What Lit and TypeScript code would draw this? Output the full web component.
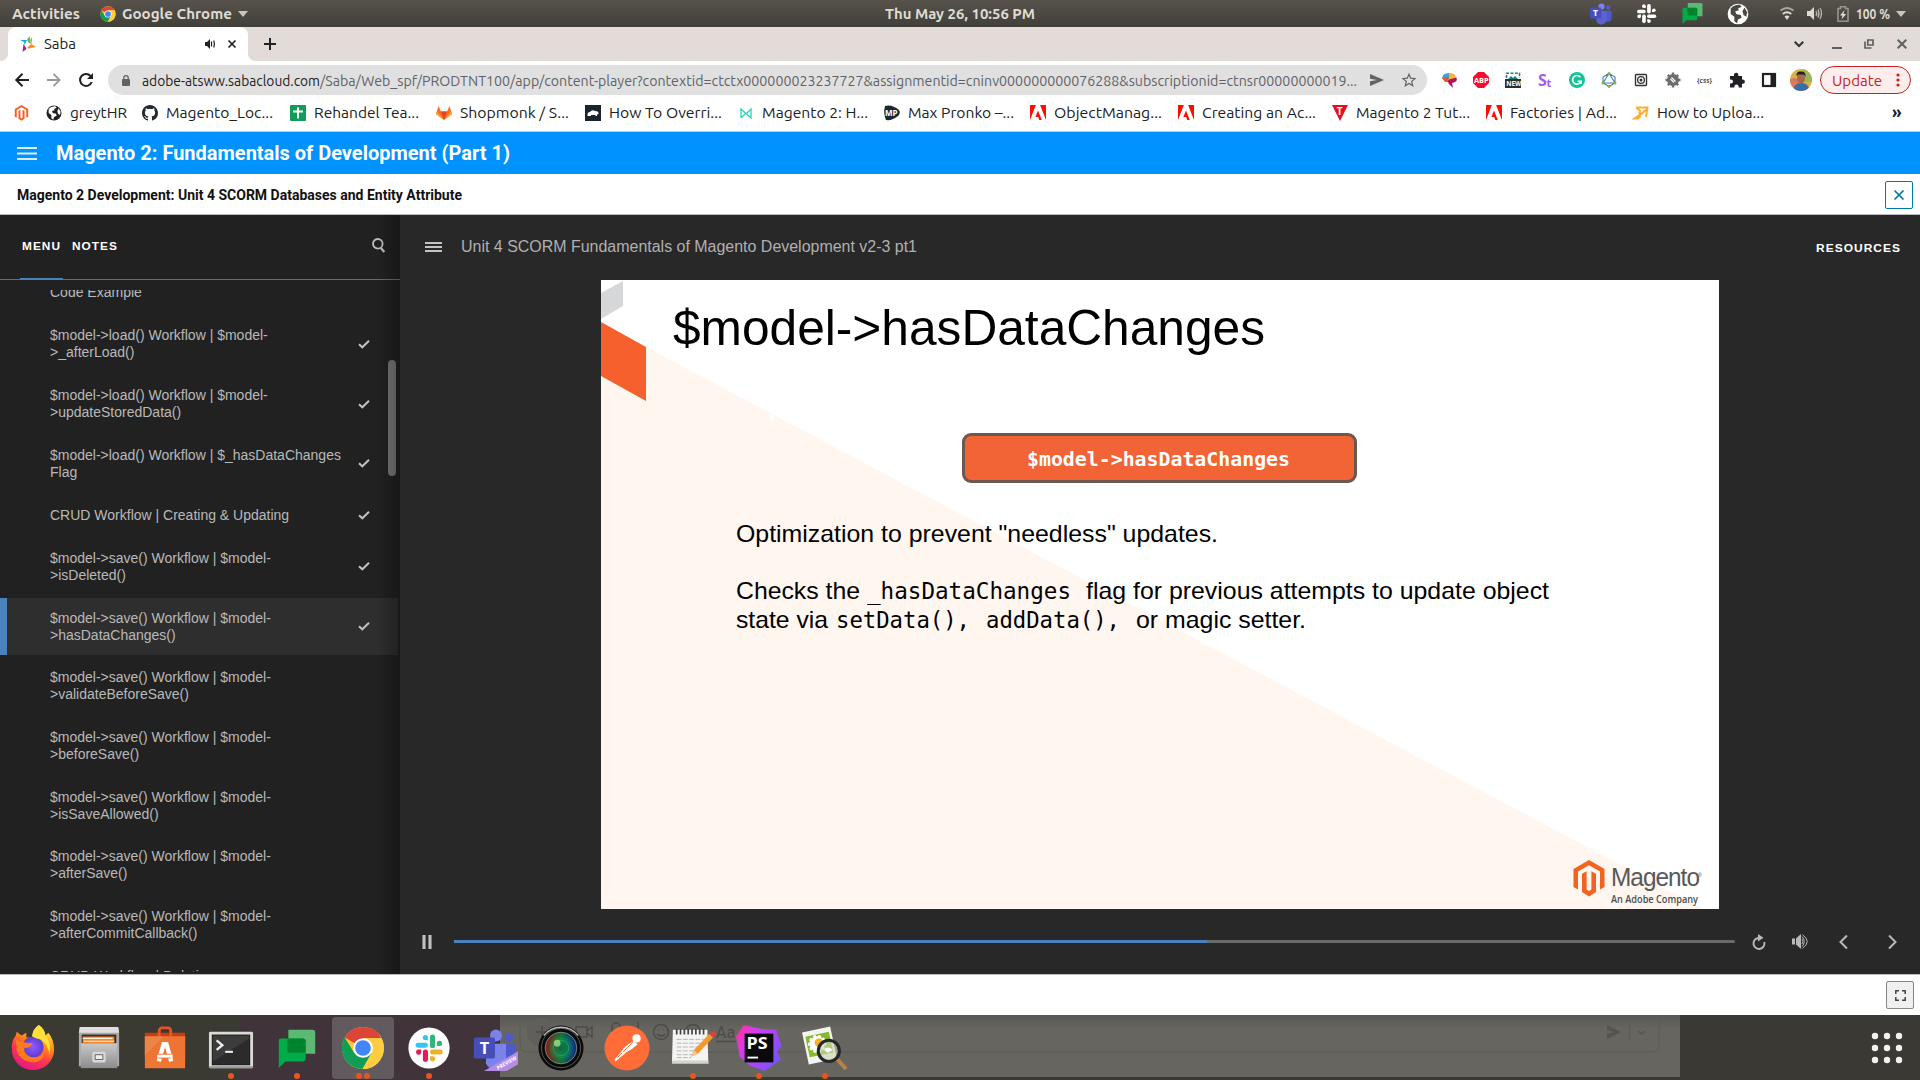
import { LitElement, html, css, svg, nothing } from "lit";
import { customElement, property } from "lit/decorators.js";

/** A run of text drawn at an exact measured width. */
@customElement("fit-text")
class FitText extends LitElement {
  @property({ type: Number }) w = 0;
  static styles = css`
    :host { display: inline-block; white-space: pre; flex: none; }
    .run { display: inline-block; transform-origin: 0 50%; white-space: pre; }
  `;
  render() {
    return html`<span class="run"><slot></slot></span>`;
  }
  firstUpdated() {
    const run = this.renderRoot.querySelector(".run") as HTMLElement;
    const natural = run.getBoundingClientRect().width;
    this.style.width = this.w + "px";
    if (natural > 0) run.style.transform = `scaleX(${this.w / natural})`;
  }
}

const icon = (w: number, h: number, body: unknown, vb = `0 0 ${w} ${h}`) =>
  html`<svg class="ico" width=${w} height=${h} viewBox=${vb}>${body}</svg>`;
const t = (w: number, s: string, cls = "") => html`<fit-text class=${cls} .w=${w}>${s}</fit-text>`;

const chromeBody = svg`
  <circle cx="24" cy="24" r="22" fill="#fcc934"/>
  <path d="M24 24 L4.9 13 A22 22 0 0 1 43.1 13.5 L24 13.5 Z" fill="#db4437"/>
  <path d="M4.9 13 A22 22 0 0 0 23.5 46 L33 29 L24 24 L14.9 29.2 Z" fill="#0f9d58"/>
  <path d="M43.1 13.5 H24 L33.2 29.2 L23.5 46 A22 22 0 0 0 43.1 13.5Z" fill="#ffcd40"/>
  <circle cx="24" cy="24" r="10.3" fill="#fff"/><circle cx="24" cy="24" r="8.2" fill="#4285f4"/>`;

const magentoBody = svg`
  <path d="M16 0 L31.5 9 V27 L27 29.6 V11.6 L16 5.2 L5 11.6 V29.6 L.5 27 V9 Z"/>
  <path d="M9 13.8 L13.6 11.2 V29.5 L16 31 L18.4 29.5 V11.2 L23 13.8 V32 L16 36.5 L9 32 Z"/>`;

const slackBody = (c: string[]) => svg`
  <rect x="9.3" y="0" width="4.6" height="12" rx="2.3" transform="translate(3.5 0)" fill=${c[0]}/>
  <path d="M19 10.2 h2.3 a2.3 2.3 0 1 0 -2.3-2.3z" fill=${c[0]}/>
  <rect x="0" y="7.3" width="11" height="4.4" rx="2.2" fill=${c[1]}/>
  <path d="M11 5 v-2.3 a2.3 2.3 0 1 0 -2.3 2.3z" fill=${c[1]}/>
  <rect x="6.5" y="13.2" width="4.6" height="11" rx="2.3" fill=${c[2]}/>
  <path d="M5 13.4 h-2.4 a2.3 2.3 0 1 0 2.4 2.3z" fill=${c[2]}/>
  <rect x="12.8" y="13.2" width="11.5" height="4.5" rx="2.2" fill=${c[3]}/>
  <path d="M12.9 19.3 v2.4 a2.3 2.3 0 1 0 2.3-2.4z" fill=${c[3]}/>`;

const chatBody = svg`
  <path d="M11 0 H36 a3 3 0 0 1 3 3 V25 H11Z" fill="#5bb974"/>
  <path d="M3 9 H26 a3 3 0 0 1 3 3 V30 a3 3 0 0 1 -3 3 H8 L1 40 V11 a2 2 0 0 1 2-2Z" fill="#00ac47"/>
  <path d="M10 9 H26 a3 3 0 0 1 3 3 V24 H13 a3 3 0 0 1 -3-3Z" fill="#00832d"/>`;

const globeBody = (fg: string, bg: string) => svg`
  <circle cx="12" cy="12" r="11.3" fill=${fg}/>
  <path d="M4 6 Q8 1.5 14 2 L16 4 L12 6 L13 8 L9 9 L10 12 L15 13 L16 16 L12 18 L11 22 L8 20 L8 15 L4 12Z" fill=${bg}/>
  <path d="M19 5 L22 10 L21 15 L18 13 L17 9Z" fill=${bg}/>`;

const adobe = icon(16, 16, svg`<path fill="#fa0f00" d="M0 0 H5.9 L0 15Z M16 0 H10.1 L16 15Z M8 5.5 L11.8 15 H9.3 L8.2 12 H5.4Z"/>`);

const lines = (w: number, h: number, th: number, c: string) =>
  icon(w, h, svg`<path fill=${c} d="M0 0h${w}v${th}h-${w}z M0 ${(h - th) / 2}h${w}v${th}h-${w}z M0 ${h - th}h${w}v${th}h-${w}z"/>`);

const check = icon(12, 9, svg`<path d="M1 4.2 L4.3 7.3 L11 .8" fill="none" stroke="#c0c0c0" stroke-width="2"/>`);

const bookmarks: Array<[unknown, string, number, number]> = [
  [icon(15, 16, svg`<g fill="#f26322">${magentoBody}</g>`, "0 0 32 37"), "", 0, 32],
  [icon(16, 16, globeBody("#202124", "#fff"), "0 0 24 24"), "greytHR", 57, 96],
  [icon(16, 16, svg`<path fill="#24292f" d="M8 0C3.58 0 0 3.58 0 8c0 3.54 2.29 6.53 5.47 7.59.4.07.55-.17.55-.38v-1.49c-2.23.48-2.69-.94-2.69-.94-.36-.93-.89-1.17-.89-1.17-.73-.5.05-.49.05-.49.8.06 1.23.83 1.23.83.71 1.23 1.87.87 2.33.66.07-.52.28-.87.51-1.07-1.78-.2-3.64-.89-3.64-3.95 0-.87.31-1.59.82-2.15-.08-.2-.36-1.02.08-2.12 0 0 .67-.21 2.2.82a7.6 7.6 0 0 1 4 0c1.53-1.04 2.2-.82 2.2-.82.44 1.1.16 1.92.08 2.12.51.56.82 1.27.82 2.15 0 3.07-1.87 3.75-3.65 3.95.29.25.54.73.54 1.48v2.19c0 .21.15.46.55.38A8 8 0 0 0 8 0Z"/>`), "Magento_Loc...", 107, 148],
  [icon(16, 16, svg`<rect width="16" height="16" rx="1" fill="#0f9d58"/><path d="M8 2.5v11M3 6.5h10" stroke="#fff" stroke-width="2"/>`), "Rehandel Tea...", 105, 146],
  [icon(16, 16, svg`<path d="M8 15 L0 9 L2.5 1 L5 6.5 H11 L13.5 1 L16 9Z" fill="#fc6d26"/><path d="M8 15 L5 6.5H11Z" fill="#e24329"/><path d="M8 15 L0 9 L1 6.5Z M8 15 L16 9 L15 6.5Z" fill="#fca326"/>`), "Shopmonk / S...", 109, 149],
  [icon(16, 16, svg`<rect width="16" height="16" fill="#1b242c"/><path d="M2.5 11 Q2 7 5 7 Q7 4 10 6 Q14 6 13.5 9 L12 9.5 V11 H10.5 V10 H6 V11Z" fill="#fff"/>`), "How To Overri...", 113, 153],
  [icon(16, 16, svg`<path d="M3 13V4L13 13V4L8.500 8.500M3 13L8 8" fill="none" stroke="#2fd0b5" stroke-width="1.300"/>`), "Magento 2: H...", 106, 146],
  [icon(16, 16, svg`<path d="M1 1 Q8-1 15 5 Q17 8 14 11 Q8 16 2 15Q-1 8 1 1Z" fill="#1d2730"/><text x="1" y="11" font-size="8" font-weight="700" font-family="Open Sans" fill="#fff">MP</text>`), "Max Pronko –...", 106, 146],
  [adobe, "ObjectManag...", 108, 148],
  [adobe, "Creating an Ac...", 114, 154],
  [icon(16, 16, svg`<path d="M0 0H16L8 16Z" fill="#e5101d"/><text x="4.7" y="9.5" font-size="10" font-weight="700" font-family="Open Sans" fill="#fff">T</text>`), "Magento 2 Tut...", 114, 154],
  [adobe, "Factories | Ad...", 107, 147],
  [icon(16, 16, svg`<path d="M3 2.500H14.500L13 12M13 4.500L8.500 9L5.500 7.500M3 2.500L8 6.500M8 9L1.500 13.500H5L8 11" fill="none" stroke="#fbb034" stroke-width="2"/>`), "How to Uploa...", 107, 132],
];

const extensions = [
  svg`<path d="M1 7 Q1 1 8 1 V7Z" fill="#3ba0dc"/><path d="M8 1 Q15 1 15 6 L8 8Z" fill="#f5b731"/><path d="M6 8 L15.5 5.5 Q17 10 11 11 L12 16 L8 12Z" fill="#b0125b"/><path d="M1 6 L8 5 L7 10 L4 10Z" fill="#e8562a"/>`,
  svg`<path d="M5 0H11L16 5V11L11 16H5L0 11V5Z" fill="#f40d2e"/><text x="1" y="11" font-size="7.4" font-weight="700" font-family="Open Sans" fill="#fff">ABP</text>`,
  svg`<path d="M1.5 6V1.2H14.5V6" fill="none" stroke="#14808c" stroke-width="1.6" stroke-dasharray="3 1.4"/><path d="M3 7l3-3 2 2 2-2 3 3z" fill="#14808c"/><rect y="7" width="16" height="9" fill="#2b2f33"/><text x="1.2" y="14" font-size="6.4" font-weight="700" font-family="Open Sans" fill="#fff">NEW</text>`,
  svg`<text x="1" y="13.500" font-size="16" font-weight="700" font-family="Open Sans" fill="#a35bf5">S</text><text x="9.500" y="15" font-size="11" font-weight="700" font-family="Open Sans" fill="#a35bf5">t</text>`,
  svg`<circle cx="8" cy="8" r="8" fill="#15c39a"/><path d="M11.3 5.2A4.3 4.3 0 1 0 12 9.2H8.6M12 9.2V12" fill="none" stroke="#fff" stroke-width="1.6"/>`,
  svg`<path d="M8 1.5 L14 5V11L8 14.5L2 11V5Z M8 1.5L14 11H2Z" fill="none" stroke="#4a7fa8" stroke-width="1.1"/><g fill="#7dba3c"><circle cx="8" cy="1.5" r="1.5"/><circle cx="14" cy="11" r="1.5"/><circle cx="2" cy="11" r="1.5"/><circle cx="8" cy="14.5" r="1.4"/></g>`,
  svg`<rect x="2.5" y="2.5" width="11" height="11" rx="1" fill="none" stroke="#333" stroke-width="1.4"/><circle cx="8" cy="8" r="3.4" fill="none" stroke="#333" stroke-width="1.3"/><circle cx="8" cy="8" r="1.5" fill="#333"/>`,
  svg`<circle cx="8" cy="8" r="6" fill="#6e6e6e"/><path d="M8 .5V15.500M.5 8H15.500M2.800 2.800L13.200 13.200M13.200 2.800L2.800 13.200" stroke="#6e6e6e" stroke-width="2.400"/><path d="M6.500 5.500L10.500 9.500M5.500 7L9 10.500" stroke="#fff" stroke-width="1.100" fill="none"/>`,
  svg`<text x="0" y="10.6" font-size="7.500" font-weight="700" font-family="Open Sans" fill="#555" textLength="15" lengthAdjust="spacingAndGlyphs">{css}</text>`,
  svg`<path d="M1 4H5V3a2 2 0 0 1 4.4 0V4H13V7.6h.8a2 2 0 0 1 0 4.2H13V15.5H9.6V14.6a2 2 0 0 0-4.2 0v.9H1V11.6h1a2 2 0 0 0 0-4H1Z" fill="#202124"/>`,
  svg`<rect x="2" y="2" width="12" height="12" fill="#fff" stroke="#202124" stroke-width="2.2"/><rect x="9.500" y="1" width="5.5" height="14" fill="#202124"/>`,
];

const menu: Array<[string, string, boolean, boolean]> = [
  ["Code Example", "", false, false],
  ["$model->load() Workflow | $model-", ">_afterLoad()", true, false],
  ["$model->load() Workflow | $model-", ">updateStoredData()", true, false],
  ["$model->load() Workflow | $_hasDataChanges", "Flag", true, false],
  ["CRUD Workflow | Creating & Updating", "", true, false],
  ["$model->save() Workflow | $model-", ">isDeleted()", true, false],
  ["$model->save() Workflow | $model-", ">hasDataChanges()", true, true],
  ["$model->save() Workflow | $model-", ">validateBeforeSave()", false, false],
  ["$model->save() Workflow | $model-", ">beforeSave()", false, false],
  ["$model->save() Workflow | $model-", ">isSaveAllowed()", false, false],
  ["$model->save() Workflow | $model-", ">afterSave()", false, false],
  ["$model->save() Workflow | $model-", ">afterCommitCallback()", false, false],
  ["CRUD Workflow | Deleting", "", false, false],
];

const teams = (preview: boolean) => svg`
  <circle cx="25" cy="7" r="6.2" fill="#7b83eb"/><circle cx="38.5" cy="9" r="4.6" fill="#5059c9"/>
  <path d="M30 15.5H44a1.2 1.2 0 0 1 1.2 1.2V30a7.5 7.5 0 0 1-15 0Z" fill="#5059c9"/>
  <path d="M15 15.5H35.5V34a11 11 0 0 1-21 2Z" fill=${preview ? "#7b83eb" : "#5a62d0"}/>
  <rect x="2" y="9" width="22" height="22" rx="2" fill="#464eb8"/>
  <text x="8" y="26" font-size="17" font-weight="700" font-family="Open Sans" fill="#fff">T</text>
  ${preview ? svg`<path d="M12.5 44 L48 23.5V37L36 44Z" fill="#b48ce4"/><text transform="translate(27 43) rotate(-30)" font-size="5.500" font-weight="700" font-family="Open Sans" fill="#fff" textLength="23" lengthAdjust="spacingAndGlyphs">PREVIEW</text>` : nothing}`;

// Launcher icons, each on a 48 by 48 grid, with the number of running windows.
const dock: Array<[unknown, number]> = [
  [svg`<defs><linearGradient id="fx" x1=".8" y1="0" x2=".3" y2="1"><stop offset="0" stop-color="#fff44f"/><stop offset=".35" stop-color="#ff980e"/><stop offset=".65" stop-color="#ff3750"/><stop offset="1" stop-color="#e31587"/></linearGradient><radialGradient id="fp"><stop offset="0" stop-color="#9059ff"/><stop offset="1" stop-color="#5b3ecf"/></radialGradient></defs>
    <path d="M30 0 Q36 4 37 11 L40 8 Q46 15 46 26 A22 21 0 0 1 2 26 Q1 17 6 11 L7 7 L12 11 L17 8 V13 L23 13 Q24 4 30 0Z" fill="url(#fx)"/>
    <circle cx="24" cy="23" r="11" fill="url(#fp)"/><path d="M6 15 Q14 19 24 19 Q22 24 15 24 Q14 30 21 33 Q31 36 36 27 Q36 38 25 39 Q10 38 7 26Z" fill="#ff7a1c"/><path d="M30 0 Q36 4 37 11 Q44 18 41 32 Q41 21 32 15 Q23 13 23 11 Q24 4 30 0Z" fill="#ffe03a"/>`, 0],
  [svg`<defs><linearGradient id="cab" x2="0" y2="1"><stop offset="0" stop-color="#c9c9c9"/><stop offset="1" stop-color="#8c8c8c"/></linearGradient></defs>
    <path d="M4 2H44L45 8V43H3V8Z" fill="#a9a9a9"/><path d="M4 2H44L45 8H3Z" fill="#dedede"/><rect x="6" y="10" width="36" height="10" fill="#3a2a20"/><rect x="7" y="12" width="33" height="7" fill="#f0883a"/><path d="M7 14H38M8 17H40" stroke="#fff1d0" stroke-width="1.2"/><rect x="5" y="19" width="38" height="26" fill="url(#cab)"/><rect x="17" y="28" width="14" height="11" rx="2" fill="#d8d8d8"/><rect x="20" y="31" width="8" height="5" fill="#eee" stroke="#666"/>`, 0],
  [svg`<path d="M3 8H45V14H3Z" fill="#c53f12"/><path d="M18 15V6a3 3 0 0 1 3-3h6a3 3 0 0 1 3 3V15" fill="none" stroke="#e95420" stroke-width="3"/><path d="M3 12H45V45H3Z" fill="#f07634"/><path d="M3 12H45V35H3Z" fill="#ee7434"/><path d="M3 12H22L3 32Z" fill="#ea9155" opacity=".6"/><path d="M17.5 38 L22.5 20H25.5L30.5 38" fill="none" stroke="#fff" stroke-width="4.5"/><path d="M17 32.5H30" stroke="#f07634" stroke-width="5"/><path d="M16 32.5H32" stroke="#fff" stroke-width="3"/>`, 0],
  [svg`<rect x="1" y="7" width="46" height="38" rx="1.5" fill="#d9dad7"/><rect x="1" y="43" width="46" height="2" fill="#999"/><rect x="4.500" y="10.500" width="39" height="31" fill="#2b2b2b" stroke="#111"/><path d="M5 11H43V14L5 38Z" fill="#444" opacity=".7"/><path d="M9 16L15 21L9 26" fill="none" stroke="#eee" stroke-width="2.4"/><path d="M18 28H26" stroke="#eee" stroke-width="2.2"/>`, 1],
  [svg`<g transform="translate(4 5)">${chatBody}</g>`, 1],
  [chromeBody, 2],
  [svg`<circle cx="24" cy="24" r="21.500" fill="#fff"/><g transform="translate(10 10) scale(1.17)">${slackBody(["#2eb67d", "#36c5f0", "#e01e5a", "#ecb22e"])}</g>`, 1],
  [svg`<g transform="translate(0 4)">${teams(true)}</g>`, 0],
  [svg`<defs><linearGradient id="ln"><stop offset="0" stop-color="#d01818"/><stop offset=".5" stop-color="#1c9a48"/><stop offset="1" stop-color="#1530d0"/></linearGradient><radialGradient id="lg"><stop offset="0" stop-color="#0d6b3c"/><stop offset=".6" stop-color="#0a7a48" stop-opacity=".5"/><stop offset="1" stop-color="#000" stop-opacity=".3"/></radialGradient></defs>
    <circle cx="24" cy="24" r="23.500" fill="#0b0b0b"/><circle cx="24" cy="24" r="20.500" fill="none" stroke="#5a5a5a" stroke-width="1"/><path d="M6 11A23 23 0 0 1 42 11" stroke="#bbb" fill="none" stroke-width="1.5"/><circle cx="24" cy="24" r="16.500" fill="url(#ln)"/><circle cx="24" cy="24" r="16.500" fill="url(#lg)"/><circle cx="24" cy="24" r="16.500" fill="none" stroke="#8a9a90" stroke-width=".8"/><circle cx="24" cy="24" r="8" fill="none" stroke="#3bd07a" opacity=".4"/><circle cx="20" cy="19" r="3.500" fill="#b8f08a" opacity=".7"/>`, 0],
  [svg`<circle cx="24" cy="24" r="23.500" fill="#ff6c37"/><circle cx="34" cy="14" r="4.300" fill="#fff"/><path d="M31 17 L35 20 Q30 25 24 28 L12 38 L11 36 L18 28 Q22 21 31 17Z" fill="#fff"/><path d="M20 28L30 18M14 34L19 29" stroke="#ff6c37" stroke-width="1"/>`, 0],
  [svg`<path d="M3 5H39L40 41H2Z" fill="#f4f4f2"/><path d="M2 41H40V37H2.300Z" fill="#d2d2d0"/><path d="M2 41H40" stroke="#555"/><path d="M7 4V10M11 4V10M15 4V10M19 4V10M23 4V10M27 4V10M31 4V10M35 4V10" stroke="#444" stroke-width="1.800"/><path d="M7 15H35M7 19H35M7 23H33M7 27H29M7 31H25M7 34H22" stroke="#b3b3b3" stroke-width="1" stroke-dasharray="5 1.500"/><path d="M22 33L25 26L41 9L45 13L29 30Z" fill="#f39a2b"/><path d="M22 33L25 26L29 30Z" fill="#e8c99a"/><path d="M41 9L44 6.500Q49 7 48 10.500L45 13Z" fill="#e0403a"/>`, 1],
  [svg`<defs><linearGradient id="ps" x1="0" x2="1" y2=".6"><stop offset="0" stop-color="#ff318c"/><stop offset=".35" stop-color="#d63cf0"/><stop offset="1" stop-color="#7b52ff"/></linearGradient></defs><path d="M8 0L26 4L42 5L44 12L48 22L43 28L47 36L30 48L14 42L4 33L0 12Z" fill="url(#ps)"/><rect x="9" y="9" width="30" height="30" fill="#0a0a0a"/><text x="11" y="25" font-size="16" font-weight="700" font-family="Open Sans" fill="#fff" textLength="22" lengthAdjust="spacingAndGlyphs">PS</text><path d="M12 34H23" stroke="#fff" stroke-width="2"/>`, 1],
  [svg`<g transform="rotate(-12 20 20)"><rect x="3" y="4" width="30" height="34" fill="#f4f4f0"/><rect x="5.500" y="9" width="25" height="22" fill="#87b92c"/><circle cx="16" cy="19" r="8" fill="#fff" stroke="#fff" stroke-dasharray="3 2" stroke-width="3"/><circle cx="18" cy="18" r="4.500" fill="#f5b21a"/></g><circle cx="28" cy="27" r="11" fill="#c9d2b0" fill-opacity=".6" stroke="#23282c" stroke-width="3.200"/><path d="M23 26q4-5 9 0l-5 3z" fill="#fff"/><path d="M37 36L46 46" stroke="#b98345" stroke-width="4"/>`, 1],
];

@customElement("app-root")
class AppRoot extends LitElement {
  static styles = css`
    :host { display: block; width: 1920px; height: 1080px; overflow: hidden; background: #fff; font-family: "Ubuntu", "Open Sans", "Noto Sans", sans-serif; }
    * { box-sizing: border-box; }
    .ico { display: block; flex: none; overflow: visible; }
    .row { display: flex; align-items: center; }
    .sys { height: 27px; background: linear-gradient(#57534c, #403f39); color: #dfdbd2; font-size: 14px; font-weight: 600; display: grid; grid-template-columns: 885px 150px 1fr; align-items: center; line-height: 26px; }
    .sys-left { padding-left: 12px; }
    .app { gap: 6px; margin-left: 20px; }
    .sys-right { padding-left: 554px; }
    .pct { margin: 0 6px 0 7px; font-size: 14px; }
    .strip { height: 34px; background: #e3dbd8; display: flex; padding-left: 8px; font-size: 15px; color: #202124; }
    .tab { width: 240px; background: #fff; border-radius: 8px 8px 0 0; padding: 0 12px 1px; position: relative; }
    .tab::before, .tab::after { content: ""; position: absolute; bottom: 0; width: 8px; height: 8px; }
    .tab::before { left: -8px; background: radial-gradient(circle at 0 0, transparent 8px, #fff 8.5px); }
    .tab::after { right: -8px; background: radial-gradient(circle at 100% 0, transparent 8px, #fff 8.5px); }
    .tab-name { margin: 0 129px 0 8px; }
    .spk { margin-right: 13px; }
    .plus { margin-left: 16px; }
    .win { margin-left: auto; padding-right: 13px; }
    .tools { height: 38px; padding-left: 15px; }
    .omni { width: 1319px; height: 30px; margin: 0 6px 0 15px; border-radius: 15px; background: #e0e0e0; padding-left: 14px; font-size: 14.6px; color: #5f6368; }
    .host { color: #202124; margin-left: 12px; }
    .nav { gap: 18px; }
    .ext { width: 32px; display: flex; justify-content: center; }
    .avatar { margin: 0 8px 0 5px; }
    .update { height: 28px; width: 91px; border: 1.3px solid #c5221f; border-radius: 14px; background: #fdeeed; color: #c5221f; padding-left: 11px; gap: 14px; font-size: 15px; }
    .marks { height: 32px; padding: 0 0 5px 14px; font-size: 15px; color: #202124; }
    .mark { gap: 8px; flex: none; height: 27px; }
    .more { margin-left: 127px; font-size: 17px; font-weight: 700; line-height: 20px; position: relative; top: -1px; }
    .blue { height: 43px; background: #0092ff; border-top: 1px solid #c3cad0; padding: 0 0 0 17px; gap: 19px; color: #fff; font: 700 20px Roboto, sans-serif; }
    .sub { height: 41px; border-bottom: 1px solid #bbb; padding: 1px 7px 0 17px; justify-content: space-between; font: 700 14px Roboto, sans-serif; color: #111; }
    .closer { width: 28px; height: 28px; border: 1.4px solid #0079a3; border-radius: 2px; display: grid; place-items: center; }
    .player { height: 759px; display: flex; background: #282828; font-family: "Liberation Sans", Arial, sans-serif; }
    .side { width: 400px; height: 759px; background: #212121; position: relative; overflow: hidden; }
    .side::after { content: ""; position: absolute; top: 0; right: 0; width: 24px; height: 759px; background: linear-gradient(90deg, rgba(0,0,0,0), rgba(0,0,0,.28)); }
    .heads { height: 65px; border-bottom: 1px solid #6c6c6c; padding: 0 15px 1px 20px; color: #fff; font-size: 11.6px; font-weight: 700; letter-spacing: 1px; }
    .head { height: 65px; line-height: 63px; padding: 0 2px; }
    .head.on { border-bottom: 2px solid #4a82be; margin: 1px 7px 0 0; width: 43px; line-height: 62px; }
    .find { margin: -3px 0 0 auto; }
    .list { margin-top: 10px; height: 682px; overflow: hidden; }
    .items { margin-top: -18px; width: 398px; }
    .item { margin-bottom: 1.9px; padding: 12px 0 12px 50px; font-size: 14px; line-height: 16.9px; color: #b9b9b9; display: flex; align-items: center; justify-content: space-between; border-left: 0 solid #4a82be; }
    .item.single { padding: 12.3px 0 12.3px 50px; }
    .item.active { background: #2e2e2e; border-left: 7px solid #4a82be; padding-left: 43px; }
    .tick { margin-right: 28px; }
    .thumb { position: absolute; left: 388px; top: 145px; width: 8px; height: 116px; border-radius: 4px; background: #757575; }
    .stage { flex: 1; display: flex; flex-direction: column; }
    .top { height: 65px; padding: 0 19px 2px 25px; color: #b0b0b0; }
    .title { margin-left: 19px; font-size: 16px; }
    .res { margin-left: auto; color: #fff; font-weight: 700; font-size: 11.6px; letter-spacing: 1px; padding-top: 1px; }
    .slide { width: 1118px; height: 629px; margin-left: 201px; background: #fff; position: relative; overflow: hidden; color: #000; display: flex; flex-direction: column; }
    .art { position: absolute; left: 0; top: 0; }
    .layer { position: relative; }
    .h1 { margin: 18px 0 0 72px; font-size: 50px; line-height: 60px; }
    .btn { margin: 75px 0 0 361px; width: 395px; height: 50px; border: 3px solid #6b5850; border-radius: 9px; background: #f26336; color: #fff; display: grid; place-items: center; padding-right: 3px; font: 700 20px/46px "DejaVu Sans Mono", monospace; }
    .body { margin: 36px 0 0 135px; font-size: 24px; line-height: 29px; }
    .line { height: 29px; display: flex; align-items: baseline; }
    .gap { height: 28px; }
    .code { font: 22.5px/29px "DejaVu Sans Mono", monospace; }
    .logo { margin: 226px 0 0 972px; gap: 6px; color: #4d4d4f; align-items: flex-start; }
    .brand { font: 25px/30px "Liberation Sans", sans-serif; letter-spacing: -1px; display: block; color: #58595b; margin-top: 2px; }
    .tag { font: 600 11.5px/13px "Open Sans", sans-serif; display: block; }
    .reg { font-size: 5px; line-height: 8px; margin: 11px 0 0 -7px; }
    .ctl { height: 65px; padding-left: 22px; }
    .track { width: 1281px; height: 3px; border-radius: 2px; background: #6a6a6a; margin: 0 17px 0 22px; }
    .fill { height: 3px; background: #4a82be; }
    .foot { height: 41px; border-top: 1px solid #bbb; padding: 0 6px; justify-content: flex-end; background: #fff; }
    .full { width: 28px; height: 28px; border: 1px solid #888; border-radius: 2px; background: #f0f0f0; display: grid; place-items: center; }
    .dock { height: 65px; position: relative; display: flex; align-items: center; background: linear-gradient(90deg, #3a3932 240px, #40343a 240px, #40343a 500px, #3a3933 500px); }
    .ghost { position: absolute; left: 500px; top: 0; width: 1180px; height: 62px; background: linear-gradient(#595751, #666560 14px); }
    .app-cell { width: 66px; height: 65px; position: relative; display: grid; place-items: center; }
    .app-cell.open::before { content: ""; position: absolute; left: 2px; top: 2px; width: 62px; height: 62px; border-radius: 4px; background: #625a5f; }
    .app-cell .ico { position: relative; }
    .dots { position: absolute; bottom: 1px; left: 0; width: 66px; display: flex; justify-content: center; gap: 2.6px; }
    .dot { width: 6px; height: 6px; border-radius: 3px; background: #e95420; }
    .grid { margin-left: auto; padding-right: 17px; position: relative; }
  `;

  private system() {
    return html`<div class="sys">
      <div class="row sys-left">${t(68, "Activities")}
        <div class="row app">${icon(16, 16, chromeBody, "1 1 46 46")}${t(110, "Google Chrome")}${icon(10, 6, svg`<path d="M0 0H10L5 6Z" fill="#c8c5bd"/>`)}</div>
      </div>
      ${t(150, "Thu May 26, 10:56 PM")}
      <div class="row sys-right">
        ${icon(23, 21, teams(false), "0 0 46 42")}
        <span style="width:25px"></span>${icon(19, 19, slackBody(["#fff", "#fff", "#fff", "#fff"]), "0 0 24 24")}
        <span style="width:26px"></span>${icon(21, 21, chatBody, "0 0 40 40")}
        <span style="width:24px"></span>${icon(22, 22, globeBody("#fff", "#4a4842"), "0 0 24 24")}
        <span style="width:31px"></span>${icon(14, 13, svg`<g fill="none" stroke="#aaa79f" stroke-width="2"><path d="M.6 3.500Q7-1.500 13.400 3.500"/><path d="M2.800 7Q7 3.500 11.200 7" stroke="#dfdbd2"/></g><path d="M4.500 9.500Q7 7.500 9.500 9.500L7 13Z" fill="#dfdbd2"/>`)}
        <span style="width:13px"></span>${icon(15, 13, svg`<path d="M0 4H3L7 0V13L3 9H0Z" fill="#dfdbd2"/><path d="M9 4Q10.500 6.500 9 9M11 2.500Q13 6.500 11 10.500M13 1Q16 6.500 13 12" fill="none" stroke="#bdbab2" stroke-width="1.200"/>`)}
        <span style="width:15px"></span>${icon(12, 16, svg`<path d="M1 2.500H3.500V.8H8.500V2.500H11V15.200H1Z" fill="none" stroke="#98958d" stroke-width="1.600"/><path d="M7.500 4L3 9.500H5.500L4.500 13.500L9.200 8H6.500Z" fill="#dfdbd2"/>`)}
        <span class="pct">${t(34, "100 %")}</span>${icon(10, 6, svg`<path d="M0 0H10L5 6Z" fill="#c8c5bd"/>`)}
      </div></div>`;
  }

  private browser() {
    return html`
      <div class="strip">
        <div class="tab row">${icon(16, 16, svg`<path d="M0 4L7 4L4.500 9L4 6Z" fill="#1ba7e0"/><path d="M7 4L9.500 0L10.500 6L12.500 8L9 7Z" fill="#6cb33f"/><path d="M10 4L12 1V7Z" fill="#8bc53f"/><path d="M7 12L11 8L16 11L9 12.500Z" fill="#f7901e"/><path d="M2.500 16L3.500 8L5.500 11L6.500 13Z" fill="#a6228e"/>`)}
          <span class="tab-name">${t(32, "Saba")}</span>
          <span class="spk">${icon(10, 10, svg`<path d="M0 3H2L5 0V10L2 7H0Z" fill="#202124"/><path d="M6.500 2.500V7.500M8.800 1.500Q10 5 8.800 8.500" stroke="#202124" stroke-width="1.200" fill="none"/>`)}</span>
          ${icon(8, 8, svg`<path d="M.5.5L7.500 7.500M7.500.5L.5 7.500" stroke="#202124" stroke-width="1.700"/>`)}
        </div>
        <div class="row plus">${icon(12, 12, svg`<path d="M6 0V12M0 6H12" stroke="#202124" stroke-width="2"/>`)}</div>
        <div class="row win">
          ${icon(10, 6, svg`<path d="M.7.7L5 5L9.300.7" fill="none" stroke="#333" stroke-width="2"/>`)}<span style="width:28px"></span>
          ${icon(10, 10, svg`<path d="M0 9H10" stroke="#5f6062" stroke-width="2"/>`)}<span style="width:22px"></span>
          ${icon(10, 10, svg`<path d="M3.800 1H9V6H3.800ZM1 2.500V9H7.500" fill="none" stroke="#5f6062" stroke-width="1.700"/>`)}<span style="width:23px"></span>
          ${icon(10, 10, svg`<path d="M.7.7L9.300 9.300M9.300.7L.7 9.300" stroke="#5f6062" stroke-width="2"/>`)}
        </div>
      </div>
      <div class="row tools">
        <div class="row nav">
          ${icon(14, 14, svg`<path d="M14 7H1.500M7.500.8L1.300 7L7.500 13.200" fill="none" stroke="#202124" stroke-width="2"/>`)}
          ${icon(14, 14, svg`<path d="M0 7H12.500M6.500.8L12.700 7L6.500 13.200" fill="none" stroke="#9a9a9a" stroke-width="1.800"/>`)}
          ${icon(14, 14, svg`<path d="M12 3.500A6 6 0 1 0 12.700 9" fill="none" stroke="#202124" stroke-width="2"/><path d="M14 0V6H8Z" fill="#202124"/>`)}
        </div>
        <div class="row omni">
          ${icon(8, 11, svg`<rect y="4" width="8" height="7" rx="1" fill="#5f6368"/><path d="M1.800 4V2.800a2.200 2.200 0 0 1 4.400 0V4" fill="none" stroke="#5f6368" stroke-width="1.300"/>`)}
          <span class="host">${t(178, "adobe-atsww.sabacloud.com")}</span>${t(1037, "/Saba/Web_spf/PRODTNT100/app/content-player?contextid=ctctx000000023237727&assignmentid=cninv000000000076288&subscriptionid=ctnsr00000000019...")}
          <span style="width:13px"></span>${icon(14, 12, svg`<path d="M0 0L14 6L0 12V7.300L7 6L0 4.700Z" fill="#5f6368"/>`)}
          <span style="width:18px"></span>${icon(14, 14, svg`<path d="M7 1.200L8.700 5.200L13 5.600L9.700 8.400L10.700 12.700L7 10.400L3.300 12.700L4.300 8.400L1 5.600L5.300 5.200Z" fill="none" stroke="#5f6368" stroke-width="1.200"/>`)}
        </div>
        ${extensions.map((e) => html`<span class="ext">${icon(16, 16, e)}</span>`)}
        <span class="avatar">${icon(22, 22, svg`<defs><clipPath id="av"><circle cx="11" cy="11" r="11"/></clipPath></defs><g clip-path="url(#av)"><rect width="22" height="22" fill="#d5b34a"/><rect x="13" width="9" height="13" fill="#9db45a"/><circle cx="4" cy="14" r="5" fill="#d77b5e"/><path d="M3 22Q4 14 11 14Q18 13 20 22Z" fill="#3b6ea8"/><ellipse cx="11" cy="9" rx="4" ry="5.500" fill="#a86a4a"/><path d="M6.500 7Q6 2 11 2.500Q16 2 15.500 8L14 5.500H8Z" fill="#222"/></g>`)}</span>
        <div class="row update">${t(50, "Update")}${icon(4, 14, svg`<g fill="#c5221f"><circle cx="2" cy="2" r="1.600"/><circle cx="2" cy="7" r="1.600"/><circle cx="2" cy="12" r="1.600"/></g>`)}</div>
      </div>
      <div class="row marks">
        ${bookmarks.map(([i, label, w, item]) => html`<div class="row mark" style="width:${item}px">${i}${label ? t(w, label) : nothing}</div>`)}
        <span class="more">»</span>
      </div>`;
  }

  private slide() {
    return html`<div class="slide">
      <svg class="art" width="1118" height="629" viewBox="0 0 1118 629">
        <path d="M0 42L45 67L1103 629H0Z" fill="#fff6f0"/>
        <path d="M0 13L22 1V26L0 39Z" fill="#d5d7d8"/>
        <path d="M0 42L45 67V121L0 96Z" fill="#f6602c"/>
        <path d="M168 134L171 142L174 136Z" fill="#fff"/>
      </svg>
      <div class="layer h1">${t(592, "$model->hasDataChanges")}</div>
      <div class="layer btn">${t(263, "$model->hasDataChanges")}</div>
      <div class="layer body">
        <div class="line">${t(482, 'Optimization to prevent "needless" updates.')}</div>
        <div class="gap"></div>
        <div class="line">${t(124, "Checks the")}<span style="width:7px"></span>${t(204, "_hasDataChanges", "code")}<span style="width:15px"></span>${t(463, "flag for previous attempts to update object")}</div>
        <div class="line">${t(92, "state via")}<span style="width:8px"></span>${t(134, "setData(),", "code")}<span style="width:16px"></span>${t(134, "addData(),", "code")}<span style="width:16px"></span>${t(170, "or magic setter.")}</div>
      </div>
      <div class="layer row logo">
        ${icon(32, 37, svg`<g fill="#f26322">${magentoBody}</g>`)}
        <div><span class="brand">${t(88, "Magento")}</span><span class="tag">${t(87, "An Adobe Company")}</span></div><span class="reg">®</span>
      </div>
    </div>`;
  }

  render() {
    return html`
      ${this.system()}${this.browser()}
      <div class="row blue">${lines(20, 13, 2, "#d9efff")}${t(454, "Magento 2: Fundamentals of Development (Part 1)")}</div>
      <div class="row sub">${t(445, "Magento 2 Development: Unit 4 SCORM Databases and Entity Attribute")}
        <div class="closer">${icon(10, 10, svg`<path d="M.5.5L9.500 9.500M9.500.5L.5 9.500" stroke="#0079a3" stroke-width="1.700"/>`)}</div></div>
      <div class="player">
        <div class="side">
          <div class="row heads"><div class="head on">${t(39, "MENU")}</div><div class="head">${t(46, "NOTES")}</div>
            <span class="find">${icon(13, 15, svg`<circle cx="5.800" cy="5.800" r="4.800" fill="none" stroke="#c0c0c0" stroke-width="1.800"/><path d="M8.500 9.500L12.300 14" stroke="#c0c0c0" stroke-width="2.200"/>`)}</span></div>
          <div class="list"><div class="items">
            ${menu.map(([a, b, done, on]) => html`<div class="item ${on ? "active" : ""} ${b ? "" : "single"}"><div>${a}${b ? html`<br />${b}` : nothing}</div>${done ? html`<span class="tick">${check}</span>` : nothing}</div>`)}
          </div></div>
          <div class="thumb"></div>
        </div>
        <div class="stage">
          <div class="row top">${lines(17, 10, 2, "#c4c4c4")}<span class="title">${t(456, "Unit 4 SCORM Fundamentals of Magento Development v2-3 pt1")}</span><span class="res">${t(85, "RESOURCES")}</span></div>
          ${this.slide()}
          <div class="row ctl">
            ${icon(10, 14, svg`<path d="M0 0h4v14h-4zM6 0h4v14h-4z" fill="#7d7d7d"/><path d="M1 0h2v14h-2zM7 0h2v14h-2z" fill="#c0c0c0"/>`)}
            <div class="track"><div class="fill" style="width:${(753 / 1281) * 100}%"></div></div>
            ${icon(14, 16, svg`<path d="M6 4A5.500 5.500 0 1 0 12.300 8" fill="none" stroke="#b9b9b9" stroke-width="1.900"/><path d="M6 0L11.500 3.800L6 7.600Z" fill="#b9b9b9"/>`)}<span style="width:26px"></span>
            ${icon(16, 15, svg`<path d="M0 4.500H3V10.500H0ZM4 4.500L9 0V15L4 10.500Z" fill="#b9b9b9"/><path d="M10 5Q12 7.500 10 10M10 2.500Q14.500 7.500 10 12.500M10.500.7Q20 7.500 10.500 14.300" fill="none" stroke="#b9b9b9" stroke-width="1"/>`)}<span style="width:31px"></span>
            ${icon(9, 14, svg`<path d="M8 .5L1.500 7L8 13.500" fill="none" stroke="#b9b9b9" stroke-width="2"/>`)}<span style="width:40px"></span>
            ${icon(9, 14, svg`<path d="M1 .5L7.500 7L1 13.500" fill="none" stroke="#b9b9b9" stroke-width="2"/>`)}
          </div>
        </div>
      </div>
      <div class="row foot"><div class="full">${icon(11, 11, svg`<path d="M.8 4V.8H4M7 .8H10.200V4M10.200 7V10.200H7M4 10.200H.8V7" fill="none" stroke="#444" stroke-width="1.500"/>`)}</div></div>
      <div class="dock">
        <svg class="ghost" width="1180" height="62" viewBox="0 0 1180 62">
          <g fill="none" stroke="#4c4b47" stroke-width="1.500">
            <path d="M20 0V30Q20 37 28 37H1150Q1159 37 1159 30V0" stroke="#5c5b56" stroke-width="1"/>
            <circle cx="41" cy="17" r="14" fill="#605f5a" stroke="none"/><path d="M36 17H48M42 11V23"/>
            <path d="M76 12H87V22H76ZM87 16L92 12V22L87 18"/><path d="M112 22V12a4 4 0 0 1 8 0M138 7V27"/>
            <circle cx="161" cy="17" r="7.500"/><path d="M157 19Q161 23 165 19M158.500 14.500V15.500M163.500 14.500V15.500"/>
            <circle cx="193" cy="17" r="7.500"/><path d="M216 26.500H236"/><path d="M1129.500 7V26" stroke="#5c5b56"/><path d="M1138 16L1141.500 19L1145 16" stroke="#55544f"/>
          </g>
          <path d="M1107 10L1121 17L1107 24V19L1114 17L1107 15Z" fill="#54534e"/>
          <text x="216" y="23" font-size="16" font-family="Roboto" fill="#4c4b47">Aa</text>
        </svg>
        ${dock.map(([body, n], i) => html`<div class="app-cell ${i === 5 ? "open" : ""}">${icon(46, 46, body, "0 0 48 48")}
          <div class="dots">${Array.from({ length: n }, () => html`<span class="dot"></span>`)}</div></div>`)}
        <div class="grid">${icon(32, 32, svg`<g fill="#f2f2f0">${[4, 16, 28].map((y) => [4, 16, 28].map((x) => svg`<circle cx=${x} cy=${y} r="3.200"/>`))}</g>`)}</div>
      </div>`;
  }
}
